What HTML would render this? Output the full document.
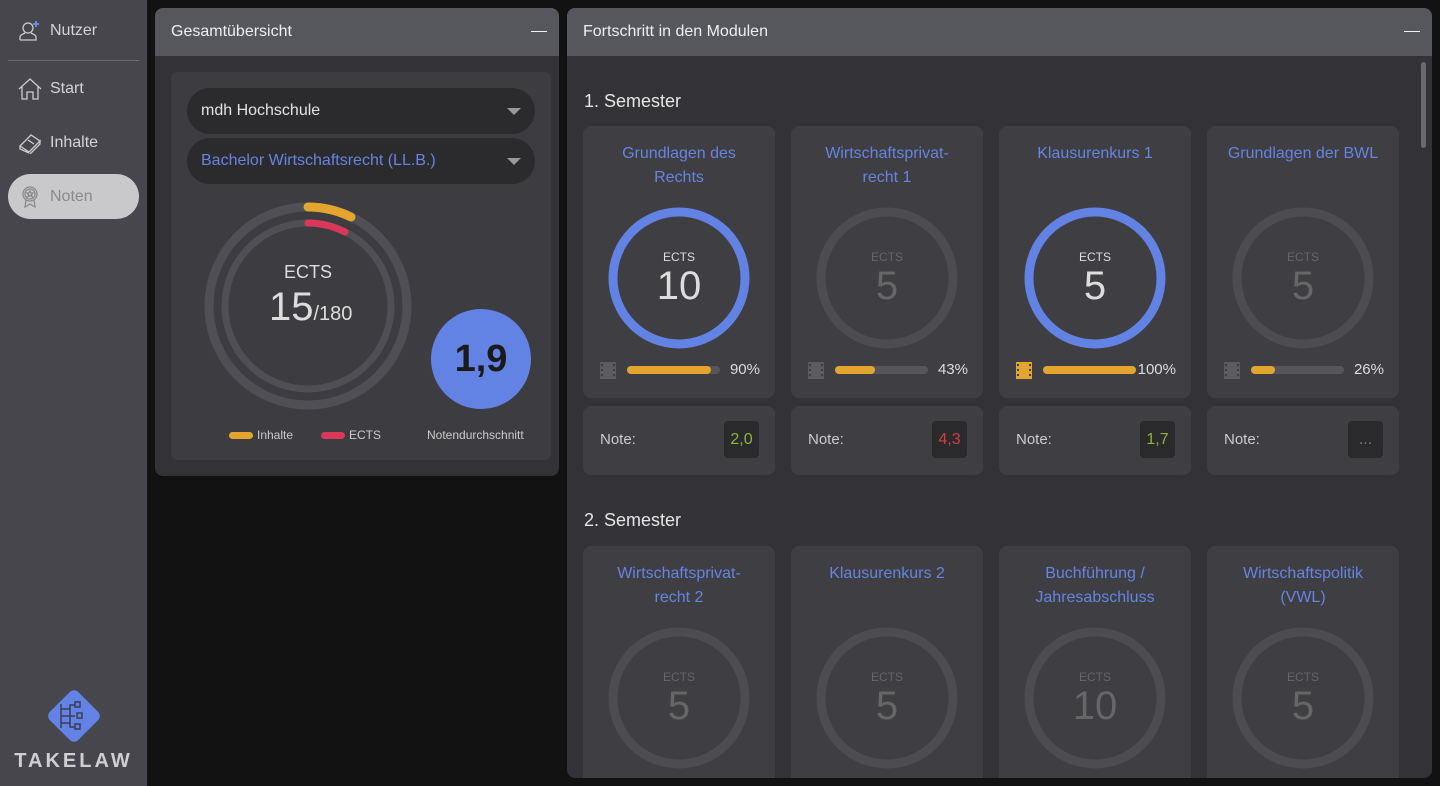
<!DOCTYPE html>
<html><head><meta charset="utf-8"><style>
*{margin:0;padding:0;box-sizing:border-box}
html,body{width:1440px;height:786px;overflow:hidden}
body{background:#121212;font-family:"Liberation Sans",sans-serif;color:#ddd}
#root{position:relative;width:1440px;height:786px;overflow:hidden}
.abs{position:absolute}
.side{left:0;top:0;width:147px;height:786px;background:#47464c}
.nav{position:absolute;left:18px;font-size:16px;color:#d4d4d6;display:flex;align-items:center;gap:8px}
.panel{position:absolute;border-radius:8px;overflow:hidden;background:#333337}
.ph{height:48px;background:#56565d;color:#eee;font-size:16px;padding:15px 16px;position:relative}
.ph .min{position:absolute;right:12px;top:23px;width:16px;height:1px;background:#eee}
.card{position:absolute;width:192px;height:272px;background:#3e3e43;border-radius:8px}
.title{position:absolute;left:0;width:192px;top:16px;text-align:center;color:#6684e0;font-size:16px;line-height:24px}
.ring{position:absolute;left:25px;top:81px}
.el{position:absolute;left:0;width:192px;text-align:center}
.bar{position:absolute;left:44px;top:240px;width:93px;height:8px;border-radius:4px;background:#55555b}
.bar i{display:block;height:8px;border-radius:4px;background:#e3a52e}
.pct{position:absolute;right:15px;top:235px;font-size:15px;color:#ddd}
.film{position:absolute;left:17px;top:236px}
.note{position:absolute;width:192px;height:69px;background:#3e3e43;border-radius:8px}
.note span{position:absolute;left:17px;top:25px;font-size:15px;color:#ccc}
.note b{position:absolute;left:141px;top:15px;width:35px;height:37px;background:#2a2a2d;border-radius:4px;font-weight:normal;font-size:16px;text-align:center;line-height:37px}
.sem{position:absolute;left:584px;font-size:18px;color:#e6e6e6}
.clip{position:absolute;left:567px;top:56px;width:865px;height:722px;overflow:hidden}
.clip .card,.clip .note{margin-left:-567px;margin-top:-56px}
.clip .sem{margin-left:-567px;margin-top:-56px}
</style></head><body><div id="root">
<div class="abs side">
 <div class="nav" style="top:20px"><svg width="24" height="22" viewBox="0 0 24 22" fill="none" stroke="#ccc" stroke-width="1.3"><circle cx="10" cy="8" r="5"/><path d="M2 20h16v-3c0-2-3-3-5-4M7 13c-2 1-5 2-5 4v3"/><path d="M18 1v6M15 4h6" stroke="#6d8cf0" stroke-width="1.8"/></svg>Nutzer</div>
 <div class="abs" style="left:8px;top:60px;width:131px;height:1px;background:#6a6a70"></div>
 <div class="nav" style="top:78px"><svg width="24" height="22" viewBox="0 0 24 22" fill="none" stroke="#ccc" stroke-width="1.3"><path d="M1 11L12 1l11 10M4 9v12h5v-7h6v7h5V9"/></svg>Start</div>
 <div class="nav" style="top:132px"><svg width="24" height="22" viewBox="0 0 24 22" fill="none" stroke="#ccc" stroke-width="1.3"><path d="M2 14L13 3l9 6-11 11zM2 14v3l9 4M11 20l11-11v3L11 23"/><path d="M10 8l6 4"/></svg>Inhalte</div>
 <div class="abs" style="left:8px;top:174px;width:131px;height:45px;border-radius:23px;background:#c9c9cb"></div>
 <div class="nav" style="top:185px;color:#8a8a8e"><svg width="24" height="24" viewBox="0 0 24 24" fill="none" stroke="#8a8a8e" stroke-width="1.3"><circle cx="12" cy="9" r="7"/><circle cx="12" cy="9" r="5"/><path d="M8 15l-1 7 5-3 5 3-1-7"/><path d="M12 6l1 2h2l-1.5 1.5.5 2-2-1-2 1 .5-2L9 8h2z"/></svg>Noten</div>
 <svg class="abs" style="left:44px;top:686px" width="60" height="60" viewBox="0 0 60 60"><rect x="10" y="10" width="40" height="40" rx="6" transform="rotate(45 30 30)" fill="#6282e4"/><g fill="none" stroke="#3a3d55" stroke-width="1.5"><path d="M17 18v24M17 23h9v-4h5M17 30h14M17 37h9v4h5M26 23v14"/><rect x="31" y="16" width="5" height="5"/><rect x="33" y="27" width="5" height="5"/><rect x="31" y="38" width="5" height="5"/></g></svg>
 <div class="abs" style="left:0;width:147px;top:750px;text-align:center;font-size:20px;font-weight:bold;letter-spacing:3px;color:#cfcfd1">TAKELAW</div>
</div>

<div class="panel" style="left:155px;top:8px;width:404px;height:468px">
 <div class="ph">Gesamtübersicht<div class="min"></div></div>
 <div class="abs" style="left:16px;top:64px;width:380px;height:388px;background:#3c3c41;border-radius:6px">
  <div class="abs" style="left:16px;top:16px;width:348px;height:46px;border-radius:23px;background:#2b2b2e;padding:14px 14px;font-size:16px;color:#e2e2e2">mdh Hochschule<div class="abs" style="right:14px;top:20px;border:7px solid transparent;border-top:7px solid #999;border-bottom:0"></div></div>
  <div class="abs" style="left:16px;top:66px;width:348px;height:46px;border-radius:23px;background:#2b2b2e;padding:14px 14px;font-size:16px;color:#6684e0">Bachelor Wirtschaftsrecht (LL.B.)<div class="abs" style="right:14px;top:20px;border:7px solid transparent;border-top:7px solid #999;border-bottom:0"></div></div>
  <svg class="abs" style="left:30px;top:127px" width="214" height="214" viewBox="0 0 214 214"><circle cx="107" cy="107" r="99" fill="none" stroke="#4f4f55" stroke-width="9"/><circle cx="107" cy="107" r="83" fill="none" stroke="#4f4f55" stroke-width="7"/><path d="M107 8A99 99 0 0 1 150 18" fill="none" stroke="#e3a52e" stroke-width="9" stroke-linecap="round"/><path d="M107 24A83 83 0 0 1 144 33" fill="none" stroke="#d9385a" stroke-width="7" stroke-linecap="round"/></svg>
  <div class="abs" style="left:30px;width:214px;top:190px;text-align:center;font-size:18px;color:#ddd">ECTS</div>
  <div class="abs" style="left:98px;top:213px;font-size:40px;color:#ddd;font-weight:300">15<span style="font-size:20px">/180</span></div>
  <div class="abs" style="left:260px;top:237px;width:100px;height:100px;border-radius:50%;background:#6282e4;color:#1a1a1a;font-weight:bold;font-size:38px;text-align:center;line-height:100px">1,9</div>
  <div class="abs" style="left:58px;top:360px;width:24px;height:7px;border-radius:4px;background:#e3a52e"></div>
  <div class="abs" style="left:86px;top:356px;font-size:12px;color:#ccc">Inhalte</div>
  <div class="abs" style="left:150px;top:360px;width:24px;height:7px;border-radius:4px;background:#d9385a"></div>
  <div class="abs" style="left:178px;top:356px;font-size:12px;color:#ccc">ECTS</div>
  <div class="abs" style="left:256px;top:356px;font-size:12px;color:#ccc">Notendurchschnitt</div>
 </div>
</div>

<div class="panel" style="left:567px;top:8px;width:865px;height:770px">
 <div class="ph">Fortschritt in den Modulen<div class="min"></div></div>
 <div class="abs" style="left:854px;top:54px;width:5px;height:86px;border-radius:3px;background:#69696e;z-index:2"></div>
</div>

<div class="clip">
<div class="sem" style="top:91px">1. Semester</div>
<div class="sem" style="top:510px">2. Semester</div>

<div class="card" style="left:583px;top:126px"><div class="title">Grundlagen des<br>Rechts</div>
 <svg class="ring" width="142" height="142"><circle cx="71" cy="71" r="66" fill="none" stroke="#6282e4" stroke-width="9"/></svg>
 <div class="el" style="top:124px;font-size:12px;color:#ddd">ECTS</div><div class="el" style="top:138px;font-size:40px;color:#ddd;font-weight:300">10</div>
 <svg class="film" width="16" height="17"><rect width="16" height="17" fill="#5c5c60"/><g fill="#3e3e43"><rect x="1" y="2" width="2" height="2"/><rect x="1" y="7" width="2" height="2"/><rect x="1" y="12" width="2" height="2"/><rect x="13" y="2" width="2" height="2"/><rect x="13" y="7" width="2" height="2"/><rect x="13" y="12" width="2" height="2"/></g></svg>
 <div class="bar"><i style="width:90%"></i></div><div class="pct">90%</div></div>
<div class="card" style="left:791px;top:126px"><div class="title">Wirtschaftsprivat-<br>recht 1</div>
 <svg class="ring" width="142" height="142"><circle cx="71" cy="71" r="66" fill="none" stroke="#4c4c51" stroke-width="9"/></svg>
 <div class="el" style="top:124px;font-size:12px;color:#666">ECTS</div><div class="el" style="top:138px;font-size:40px;color:#666;font-weight:300">5</div>
 <svg class="film" width="16" height="17"><rect width="16" height="17" fill="#5c5c60"/><g fill="#3e3e43"><rect x="1" y="2" width="2" height="2"/><rect x="1" y="7" width="2" height="2"/><rect x="1" y="12" width="2" height="2"/><rect x="13" y="2" width="2" height="2"/><rect x="13" y="7" width="2" height="2"/><rect x="13" y="12" width="2" height="2"/></g></svg>
 <div class="bar"><i style="width:43%"></i></div><div class="pct">43%</div></div>
<div class="card" style="left:999px;top:126px"><div class="title">Klausurenkurs 1</div>
 <svg class="ring" width="142" height="142"><circle cx="71" cy="71" r="66" fill="none" stroke="#6282e4" stroke-width="9"/></svg>
 <div class="el" style="top:124px;font-size:12px;color:#ddd">ECTS</div><div class="el" style="top:138px;font-size:40px;color:#ddd;font-weight:300">5</div>
 <svg class="film" width="16" height="17"><rect width="16" height="17" fill="#e3a52e"/><g fill="#3e3e43"><rect x="1" y="2" width="2" height="2"/><rect x="1" y="7" width="2" height="2"/><rect x="1" y="12" width="2" height="2"/><rect x="13" y="2" width="2" height="2"/><rect x="13" y="7" width="2" height="2"/><rect x="13" y="12" width="2" height="2"/></g></svg>
 <div class="bar"><i style="width:100%"></i></div><div class="pct">100%</div></div>
<div class="card" style="left:1207px;top:126px"><div class="title">Grundlagen der BWL</div>
 <svg class="ring" width="142" height="142"><circle cx="71" cy="71" r="66" fill="none" stroke="#4c4c51" stroke-width="9"/></svg>
 <div class="el" style="top:124px;font-size:12px;color:#666">ECTS</div><div class="el" style="top:138px;font-size:40px;color:#666;font-weight:300">5</div>
 <svg class="film" width="16" height="17"><rect width="16" height="17" fill="#5c5c60"/><g fill="#3e3e43"><rect x="1" y="2" width="2" height="2"/><rect x="1" y="7" width="2" height="2"/><rect x="1" y="12" width="2" height="2"/><rect x="13" y="2" width="2" height="2"/><rect x="13" y="7" width="2" height="2"/><rect x="13" y="12" width="2" height="2"/></g></svg>
 <div class="bar"><i style="width:26%"></i></div><div class="pct">26%</div></div>

<div class="note" style="left:583px;top:406px"><span>Note:</span><b style="color:#8db33a">2,0</b></div>
<div class="note" style="left:791px;top:406px"><span>Note:</span><b style="color:#d33c3c">4,3</b></div>
<div class="note" style="left:999px;top:406px"><span>Note:</span><b style="color:#8db33a">1,7</b></div>
<div class="note" style="left:1207px;top:406px"><span>Note:</span><b style="color:#777">...</b></div>

<div class="card" style="left:583px;top:546px"><div class="title">Wirtschaftsprivat-<br>recht 2</div>
 <svg class="ring" width="142" height="142"><circle cx="71" cy="71" r="66" fill="none" stroke="#4c4c51" stroke-width="9"/></svg>
 <div class="el" style="top:124px;font-size:12px;color:#666">ECTS</div><div class="el" style="top:138px;font-size:40px;color:#666;font-weight:300">5</div></div>
<div class="card" style="left:791px;top:546px"><div class="title">Klausurenkurs 2</div>
 <svg class="ring" width="142" height="142"><circle cx="71" cy="71" r="66" fill="none" stroke="#4c4c51" stroke-width="9"/></svg>
 <div class="el" style="top:124px;font-size:12px;color:#666">ECTS</div><div class="el" style="top:138px;font-size:40px;color:#666;font-weight:300">5</div></div>
<div class="card" style="left:999px;top:546px"><div class="title">Buchführung /<br>Jahresabschluss</div>
 <svg class="ring" width="142" height="142"><circle cx="71" cy="71" r="66" fill="none" stroke="#4c4c51" stroke-width="9"/></svg>
 <div class="el" style="top:124px;font-size:12px;color:#666">ECTS</div><div class="el" style="top:138px;font-size:40px;color:#666;font-weight:300">10</div></div>
<div class="card" style="left:1207px;top:546px"><div class="title">Wirtschaftspolitik<br>(VWL)</div>
 <svg class="ring" width="142" height="142"><circle cx="71" cy="71" r="66" fill="none" stroke="#4c4c51" stroke-width="9"/></svg>
 <div class="el" style="top:124px;font-size:12px;color:#666">ECTS</div><div class="el" style="top:138px;font-size:40px;color:#666;font-weight:300">5</div></div>
</div>
</div></body></html>
